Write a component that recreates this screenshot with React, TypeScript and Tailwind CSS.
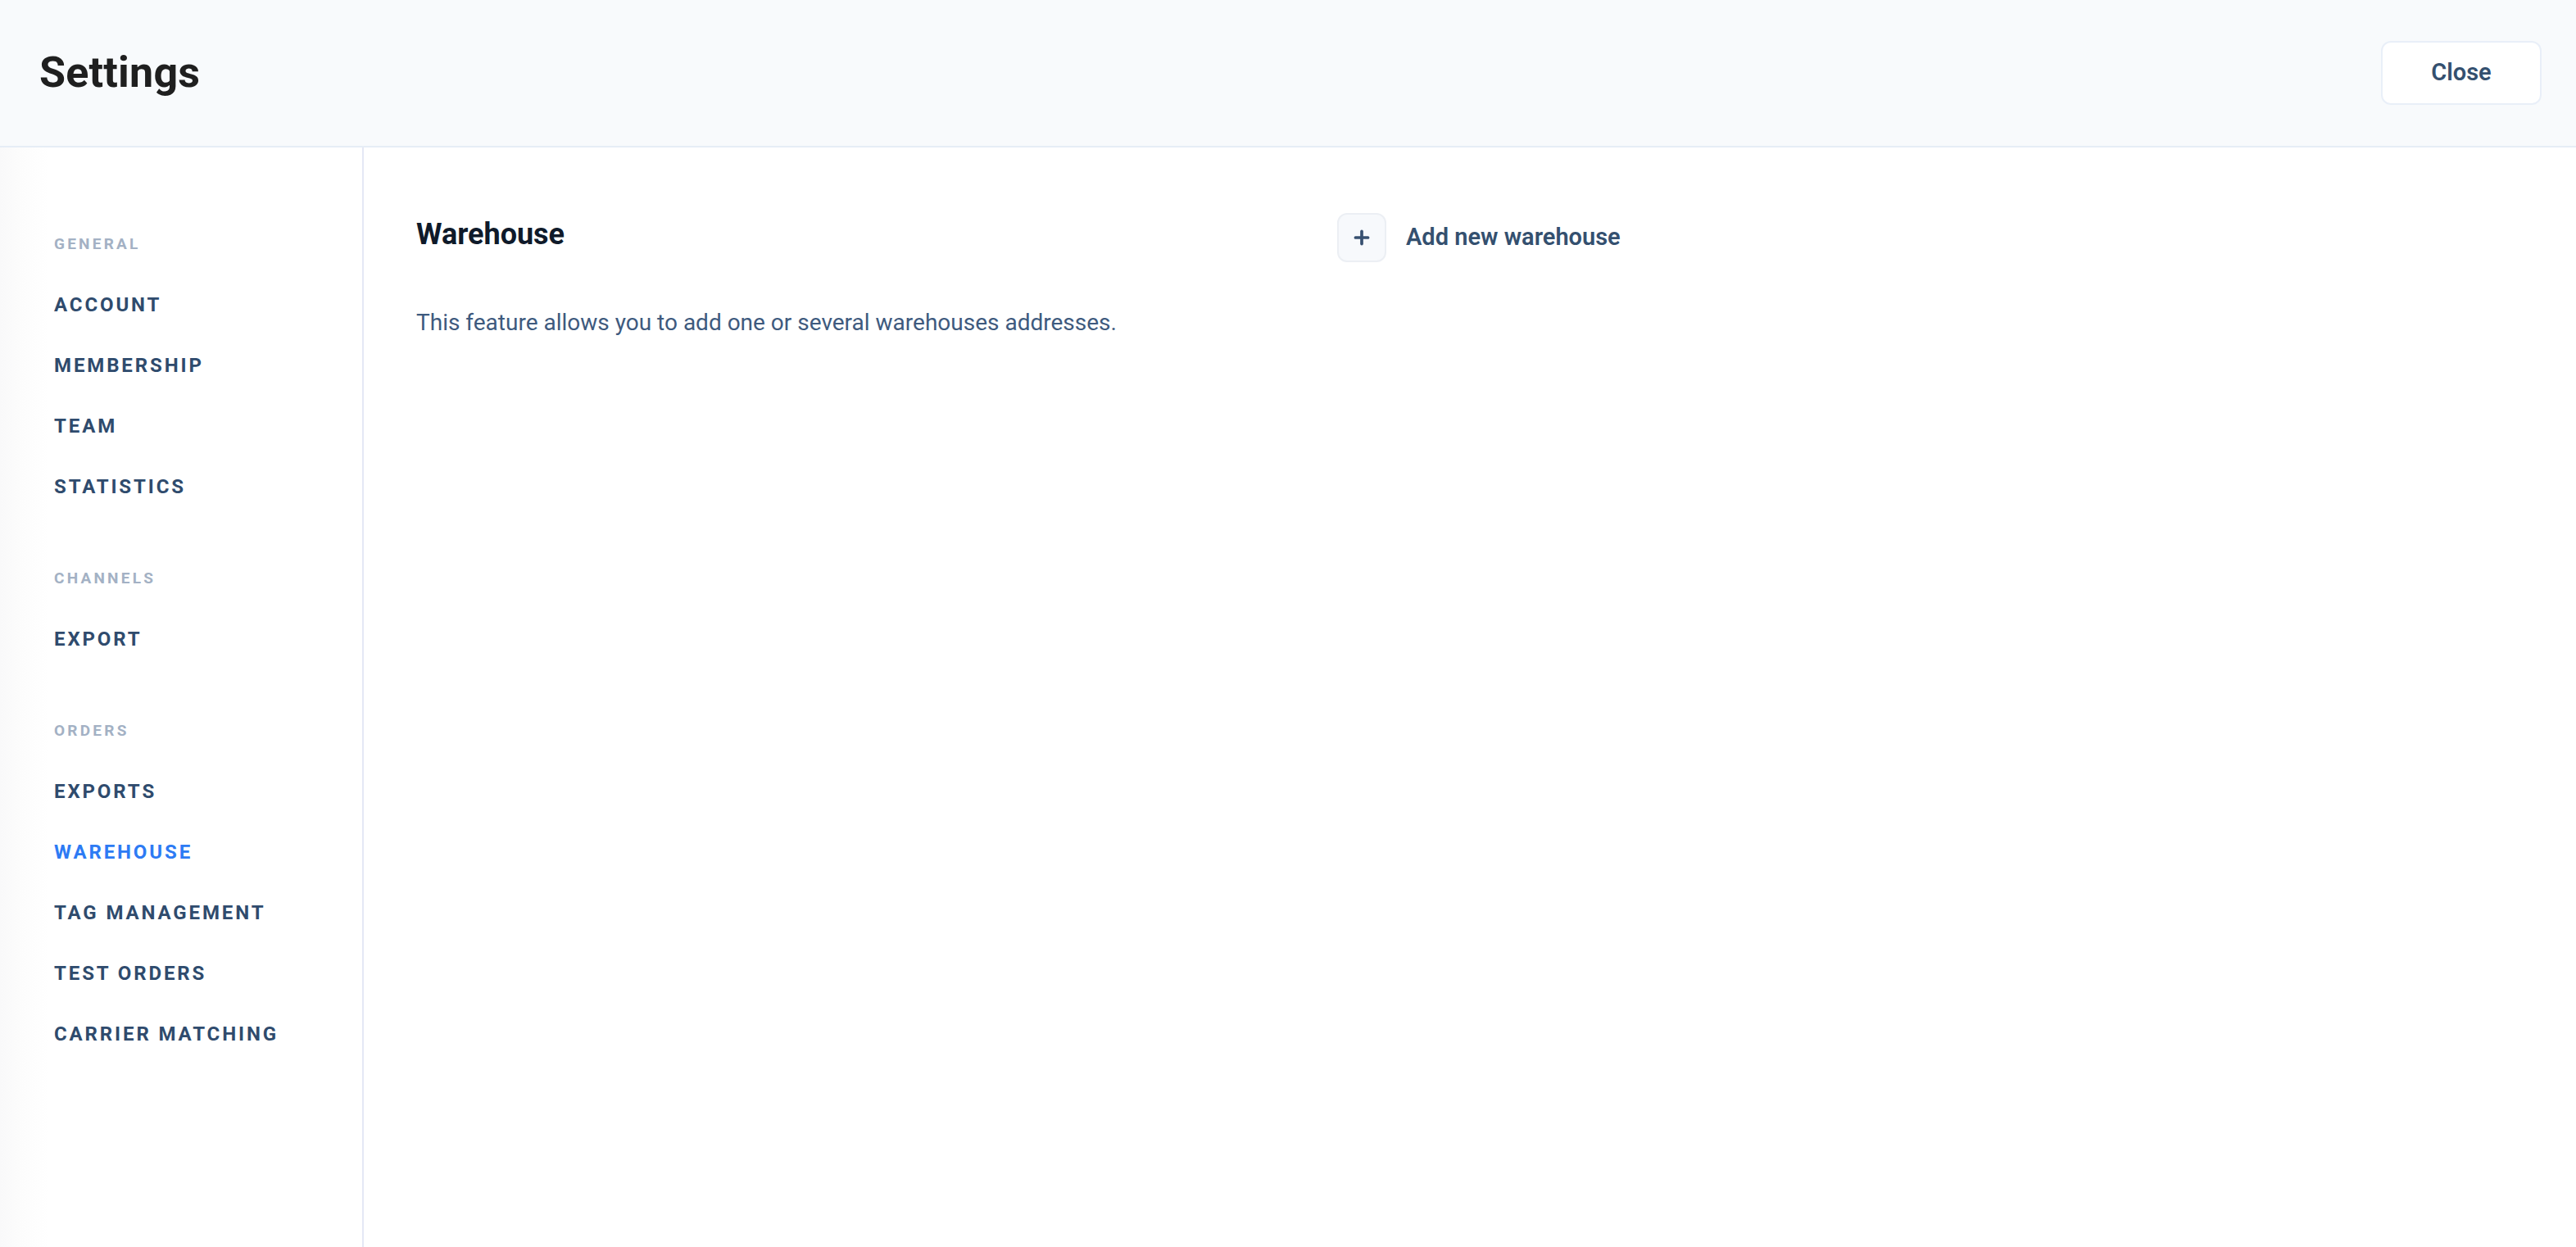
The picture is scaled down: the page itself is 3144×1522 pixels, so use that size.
import { Plus } from 'lucide-react'

type NavGroup = { label: string; items: string[] }

const groups: NavGroup[] = [
  { label: 'General', items: ['Account', 'Membership', 'Team', 'Statistics'] },
  { label: 'Channels', items: ['Export'] },
  { label: 'Orders', items: ['Exports', 'Warehouse', 'Tag management', 'Test orders', 'Carrier matching'] },
]

const active = 'Warehouse'

export default function App() {
  return (
    <div className="flex h-screen flex-col bg-white font-['Roboto',_sans-serif]">
      {/* Header */}
      <header className="flex h-[180px] shrink-0 items-center justify-between border-b-2 border-[#e6edf6] bg-[#f8fafc] pl-[48px] pr-[42px]">
        <h1 className="text-[52px] font-bold tracking-[0.2px] text-[#1f1f1f]">Settings</h1>
        <button className="h-[78px] w-[196px] rounded-[12px] border-2 border-[#e9eff8] bg-white text-[29px] font-semibold text-[#34506f]">
          Close
        </button>
      </header>

      <div className="flex min-h-0 flex-1">
        {/* Sidebar */}
        <aside className="w-[444px] shrink-0 border-r-2 border-[#e4e8f5] bg-[linear-gradient(to_right,#f9f9fa,#fcfcfc_24px,#ffffff_60px)] pl-[66px] pt-[81px]">
          {groups.map((g, gi) => (
            <div key={g.label} className={gi > 0 ? 'mt-[38px]' : ''}>
              <p className="flex h-[74px] items-center text-[19px] font-bold uppercase tracking-[0.17em] text-[#a3b1c4]">
                {g.label}
              </p>
              {g.items.map((item) => (
                <a
                  key={item}
                  className={`flex h-[74px] items-center text-[24px] font-bold uppercase tracking-[0.12em] ${
                    item === active ? 'text-[#2d7bf4]' : 'text-[#2f4b6d]'
                  }`}
                >
                  {item}
                </a>
              ))}
            </div>
          ))}
        </aside>

        {/* Content */}
        <main className="flex flex-1 items-start pl-[64px] pt-[80px]">
          <div className="w-[1124px] shrink-0">
            <h2 className="pt-[2px] text-[36px] font-bold leading-[48px] text-[#0f1a2a]">Warehouse</h2>
            <p className="mt-[64px] text-[28px] leading-[40px] text-[#3e5a7e]">
              This feature allows you to add one or several warehouses addresses.
            </p>
          </div>
          <button className="flex items-center gap-[24px]">
            <span className="flex h-[60px] w-[60px] items-center justify-center rounded-[12px] border-2 border-[#eceff4] bg-[#f7f9fc]">
              <Plus size={26} strokeWidth={3.4} className="text-[#375070]" />
            </span>
            <span className="text-[29px] font-semibold text-[#34506f]">Add new warehouse</span>
          </button>
        </main>
      </div>
    </div>
  )
}
